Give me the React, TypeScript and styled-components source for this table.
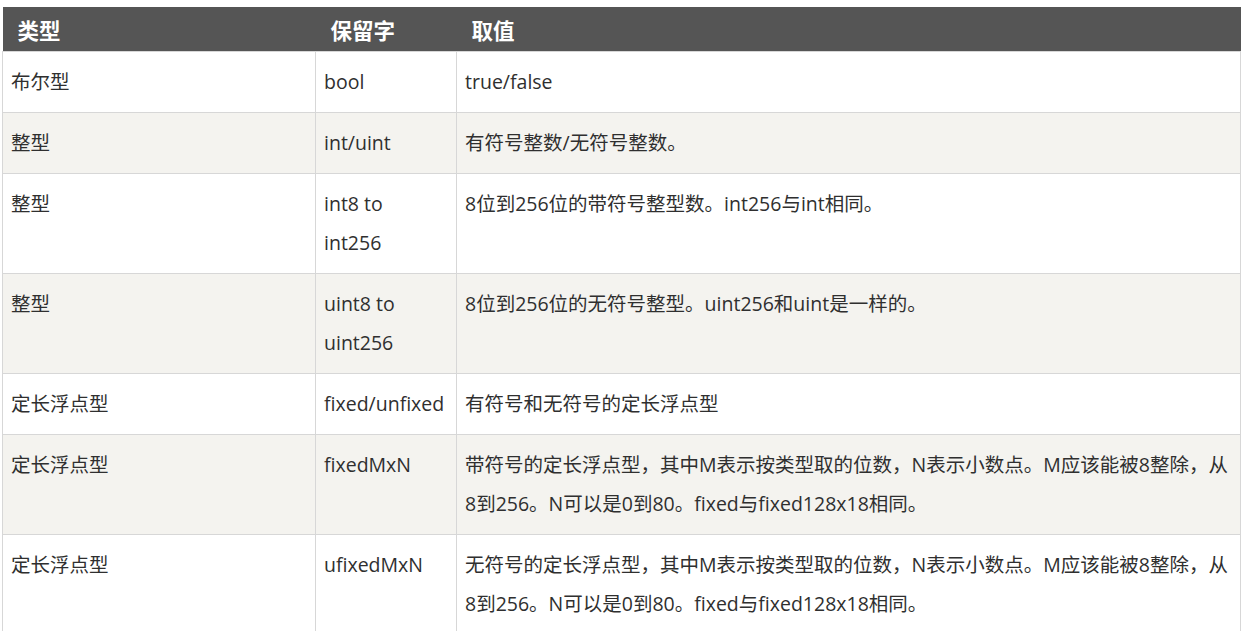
import React from 'react';
import styled, { createGlobalStyle } from 'styled-components';

interface Row {
  kind: string;
  word: string[];
  value: string[];
}

const rows: Row[] = [
  { kind: '布尔型', word: ['bool'], value: ['true/false'] },
  { kind: '整型', word: ['int/uint'], value: ['有符号整数/无符号整数。'] },
  { kind: '整型', word: ['int8 to', 'int256'], value: ['8位到256位的带符号整型数。int256与int相同。'] },
  { kind: '整型', word: ['uint8 to', 'uint256'], value: ['8位到256位的无符号整型。uint256和uint是一样的。'] },
  { kind: '定长浮点型', word: ['fixed/unfixed'], value: ['有符号和无符号的定长浮点型'] },
  {
    kind: '定长浮点型',
    word: ['fixedMxN'],
    value: [
      '带符号的定长浮点型，其中M表示按类型取的位数，N表示小数点。M应该能被8整除，从',
      '8到256。N可以是0到80。fixed与fixed128x18相同。',
    ],
  },
  {
    kind: '定长浮点型',
    word: ['ufixedMxN'],
    value: [
      '无符号的定长浮点型，其中M表示按类型取的位数，N表示小数点。M应该能被8整除，从',
      '8到256。N可以是0到80。fixed与fixed128x18相同。',
    ],
  },
];

const GlobalStyle = createGlobalStyle`
  body {
    margin: 0;
    padding: 7px 0 0 2px;
    background: #fff;
    font-family: "Open Sans", "Noto Sans CJK SC", sans-serif;
  }
`;

const Table = styled.table`
  width: 1238px;
  border-collapse: collapse;
  table-layout: fixed;
  color: #2f2f2f;
  font-size: 19.5px;
`;

const HeadCell = styled.th`
  height: 44px;
  padding: 0 15px;
  background: #555;
  color: #fff;
  font-size: 21.5px;
  font-weight: 700;
  text-align: left;
  font-family: "Noto Sans CJK SC", sans-serif;
`;

const BodyRow = styled.tr`
  &:nth-child(even) {
    background: #f4f3ef;
  }
`;

const Cell = styled.td`
  padding: 10px 8px 11px;
  border: 1px solid #d7d7d7;
  line-height: 39px;
  vertical-align: top;
  white-space: nowrap;
  overflow: hidden;
`;

const Line = styled.div``;

const App: React.FC = () => {
  return (
    <>
      <GlobalStyle />
      <Table>
        <colgroup>
          <col style={{ width: 313 }} />
          <col style={{ width: 141 }} />
          <col style={{ width: 784 }} />
        </colgroup>
        <thead>
          <tr>
            <HeadCell>类型</HeadCell>
            <HeadCell>保留字</HeadCell>
            <HeadCell>取值</HeadCell>
          </tr>
        </thead>
        <tbody>
          {rows.map((r, i) => (
            <BodyRow key={i}>
              <Cell>{r.kind}</Cell>
              <Cell>
                {r.word.map((w) => (
                  <Line key={w}>{w}</Line>
                ))}
              </Cell>
              <Cell>
                {r.value.map((v) => (
                  <Line key={v}>{v}</Line>
                ))}
              </Cell>
            </BodyRow>
          ))}
        </tbody>
      </Table>
    </>
  );
};

export default App;
